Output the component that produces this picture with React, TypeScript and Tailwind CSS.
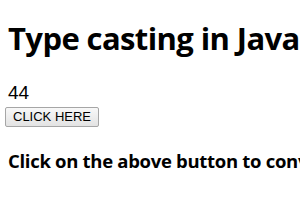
export default function App() {
  return (
    <div className="w-[300px] h-[210px] overflow-hidden bg-white text-black px-2">
      <h1 className="whitespace-nowrap pt-[18px] text-[31px] leading-[40px] font-bold font-['Open_Sans',sans-serif] tracking-[-0.6px]">
        Type casting in JavaScript
      </h1>
      <div className="mt-[25px] text-[19px] leading-[20px] font-['Liberation_Sans',Arial,sans-serif]">
        44
      </div>
      <button className="h-[20px] px-[7px] text-[13px] leading-none text-black font-['Liberation_Sans',Arial,sans-serif] bg-gradient-to-b from-[#f8f8f8] to-[#e3e3e3] border border-[#a6a6a6] rounded-[2px] -ml-[3px]">
        CLICK HERE
      </button>
      <h3 className="whitespace-nowrap mt-[22px] text-[18.5px] leading-[24px] font-bold font-['Open_Sans',sans-serif] tracking-[-0.3px]">
        Click on the above button to convert the number into a string
      </h3>
    </div>
  );
}
